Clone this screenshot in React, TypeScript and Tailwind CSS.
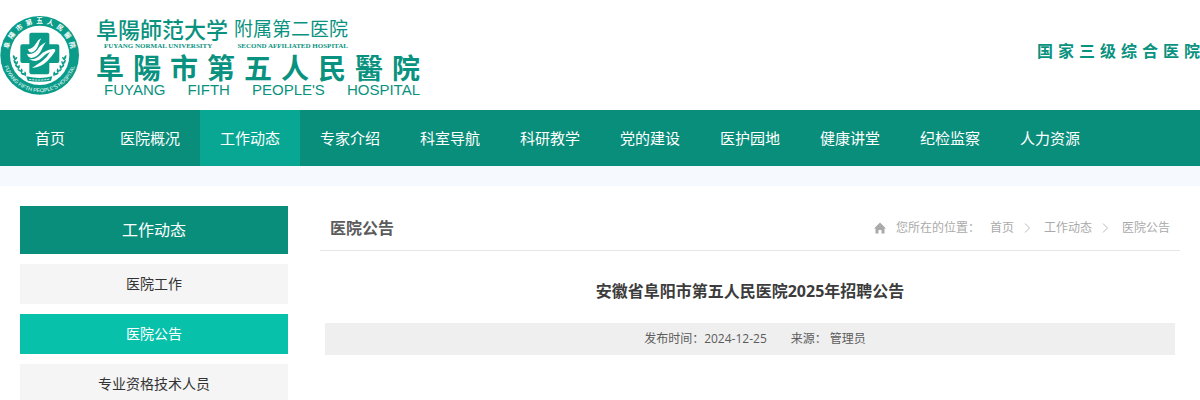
const NAV = [
  "首页", "医院概况", "工作动态", "专家介绍", "科室导航", "科研教学",
  "党的建设", "医护园地", "健康讲堂", "纪检监察", "人力资源",
];

const SIDE = ["医院工作", "医院公告", "专业资格技术人员"];

const CRUMBS = ["首页", "工作动态", "医院公告"];

// wreath leaves on the left side, mirrored for the right
const LEAVES = [
  { x: 42, y: 172, r: 60 },
  { x: 45, y: 186, r: 48 },
  { x: 51, y: 199, r: 38 },
  { x: 60, y: 211, r: 26 },
  { x: 71, y: 221, r: 14 },
];

function Leaves() {
  return (
    <>
      {LEAVES.map((l) => (
        <g key={l.y} transform={`translate(${l.x} ${l.y}) rotate(${l.r})`}>
          <path d="M-10 -2 Q-1 -9 5 0 Q-3 4 -10 -2Z" />
          <path d="M1 -11 Q10 -5 6 4 Q-2 -3 1 -11Z" />
        </g>
      ))}
    </>
  );
}

function Seal() {
  return (
    <svg viewBox="0 42 240 240" className="size-20 shrink-0" fill="#0a9c89" aria-hidden="true">
      <defs>
        <path id="arcTop" d="M26 181 A95 95 0 1 1 212 181" />
        <path id="arcBottom" d="M11 188 A111 111 0 0 0 227 188" />
      </defs>
      <circle cx="119" cy="163" r="118" />
      <circle cx="119" cy="163" r="89" fill="#fff" />
      <text fill="#fff" fontSize="20" fontWeight="700" fontFamily="'Noto Sans CJK TC', sans-serif">
        {["阜", "陽", "市", "第", "五", "人", "民", "醫", "院"].map((c, i) => (
          <textPath key={i} href="#arcTop" startOffset={`${14 + i * 9}%`} textAnchor="middle">
            {c}
          </textPath>
        ))}
      </text>
      <text fill="#fff" fontSize="16" fontFamily="'Liberation Sans', sans-serif">
        <textPath href="#arcBottom" startOffset="50%" textAnchor="middle">
          FUYANG FIFTH PEOPLE'S HOSPITAL
        </textPath>
      </text>
      {/* cross */}
      <path d="M94 95 H142 Q148 95 148 101 V130 H172 Q178 130 178 136 V180 Q178 186 172 186 H148 V214 Q148 220 142 220 H94 Q88 220 88 214 V186 H67 Q61 186 61 180 V136 Q61 130 67 130 H88 V101 Q88 95 94 95Z" />
      {/* hand */}
      <g fill="#fff">
        <path d="M83 145 Q99 143 109 126 Q114 116 124 112 Q118 120 115 133 Q109 149 97 154 Q88 157 83 145Z" />
        <path d="M81 158 Q97 163 112 147 Q119 134 137 124 Q128 138 123 150 Q112 169 94 171 Q84 169 81 158Z" />
        <path d="M86 174 Q105 178 121 162 Q134 148 158 144 Q170 143 164 153 Q156 166 142 180 Q125 198 96 201 Q108 193 126 181 Q142 169 150 153 Q137 157 125 171 Q111 187 86 174Z" />
      </g>
      <Leaves />
      <g transform="translate(238 0) scale(-1 1)">
        <Leaves />
      </g>
      {/* ribbon */}
      <path d="M79 226 Q119 236 157 226 L153 239 Q119 245 83 239Z" />
      <path d="M88 235 Q119 240 149 234" fill="none" stroke="#fff" strokeWidth="3" strokeDasharray="6 3" />
    </svg>
  );
}

function Spread({ text, sep = "" }: { text: string; sep?: string }) {
  return (
    <>
      {text.split(sep).map((t, i) => (
        <span key={i}>{t}</span>
      ))}
    </>
  );
}

function Header() {
  return (
    <header className="flex h-[110px] items-center justify-between text-[#0a9280]">
      <a href="#" className="flex items-center gap-4">
        <Seal />
        <div className="w-[324px] whitespace-nowrap">
          <div className="flex w-[252px] items-center justify-between leading-7">
            <span className="font-['Noto_Sans_CJK_TC',sans-serif] text-[22px] font-medium">阜陽師范大学</span>
            <span className="font-['Noto_Sans_CJK_SC',sans-serif] text-[19px]">附属第二医院</span>
          </div>
          <div className="flex w-[252px] justify-between pl-2 font-['Liberation_Serif',serif] text-[7px] leading-[9px] font-bold">
            <span>FUYANG NORMAL UNIVERSITY</span>
            <span>SECOND AFFILIATED HOSPITAL</span>
          </div>
          <div className="flex justify-between font-['Noto_Sans_CJK_TC',sans-serif] text-[28px] leading-8 font-bold">
            <Spread text="阜陽市第五人民醫院" />
          </div>
          <div className="flex justify-between pl-2 font-['Liberation_Sans',sans-serif] text-[15px] leading-[14px]">
            <Spread text="FUYANG FIFTH PEOPLE'S HOSPITAL" sep=" " />
          </div>
        </div>
      </a>
      <p className="flex gap-[5px] pb-2 text-[16px] leading-6 font-bold">
        <Spread text="国家三级综合医院" />
      </p>
    </header>
  );
}

function Sidebar() {
  return (
    <aside className="w-[268px] shrink-0 text-center">
      <h2 className="bg-[#0a8e7c] text-[16px] leading-12 text-white">工作动态</h2>
      <ul className="mt-[10px] flex flex-col gap-[10px]">
        {SIDE.map((s) => (
          <li key={s}>
            <a
              href="#"
              className={
                s === "医院公告"
                  ? "block bg-[#07c1ab] text-[14px] leading-10 text-white"
                  : "block bg-[#f5f5f5] text-[14px] leading-10 text-[#333]"
              }
            >
              {s}
            </a>
          </li>
        ))}
      </ul>
    </aside>
  );
}

export default function App() {
  return (
    <div className="h-screen overflow-hidden bg-white font-['Open_Sans','Noto_Sans_CJK_SC',sans-serif]">
      <Header />
      <nav className="flex bg-[#0a8e7c]">
        {NAV.map((n) => (
          <a
            key={n}
            href="#"
            className={
              n === "工作动态"
                ? "w-[100px] bg-[#08a794] text-center text-[15px] leading-14 text-white"
                : "w-[100px] text-center text-[15px] leading-14 text-white"
            }
          >
            {n}
          </a>
        ))}
      </nav>
      <div className="h-5 bg-[#f6f9fe]" />

      <div className="flex gap-8 p-5">
        <Sidebar />
        <main className="min-w-0 flex-1">
          <div className="flex items-center justify-between border-b border-[#e6e6e6] px-[10px]">
            <h2 className="text-[16px] leading-11 font-bold text-[#5b5b5b]">医院公告</h2>
            <div className="flex items-center text-[12px] leading-11 text-[#aaa]">
              <svg viewBox="0 0 12 12" className="mr-[10px] size-3" fill="#aaa">
                <path d="M6 0.500 L12 6.500 H10.500 V11.500 H7.500 V8 H4.500 V11.500 H1.500 V6.500 H0Z" />
              </svg>
              <span className="mr-[10px]">您所在的位置：</span>
              {CRUMBS.map((c, i) => (
                <span key={c} className="flex items-center">
                  {i > 0 && (
                    <svg viewBox="0 0 8 10" className="mr-3 ml-[10px] h-[10px] w-2" fill="none" stroke="#bbb">
                      <path d="M1 0.500 L5.500 5 L1 9.500" />
                    </svg>
                  )}
                  <a href="#">{c}</a>
                </span>
              ))}
            </div>
          </div>
          <h1 className="mt-6 mb-4 text-center text-[16px] leading-8 font-bold text-[#3c3c3c]">
            安徽省阜阳市第五人民医院2025年招聘公告
          </h1>
          <p className="mx-[5px] flex justify-center gap-6 bg-[#efefef] pl-[10px] text-[12px] leading-8 text-[#5c5c5c]">
            <span>发布时间：2024-12-25</span>
            <span>来源： 管理员</span>
          </p>
        </main>
      </div>
    </div>
  );
}
